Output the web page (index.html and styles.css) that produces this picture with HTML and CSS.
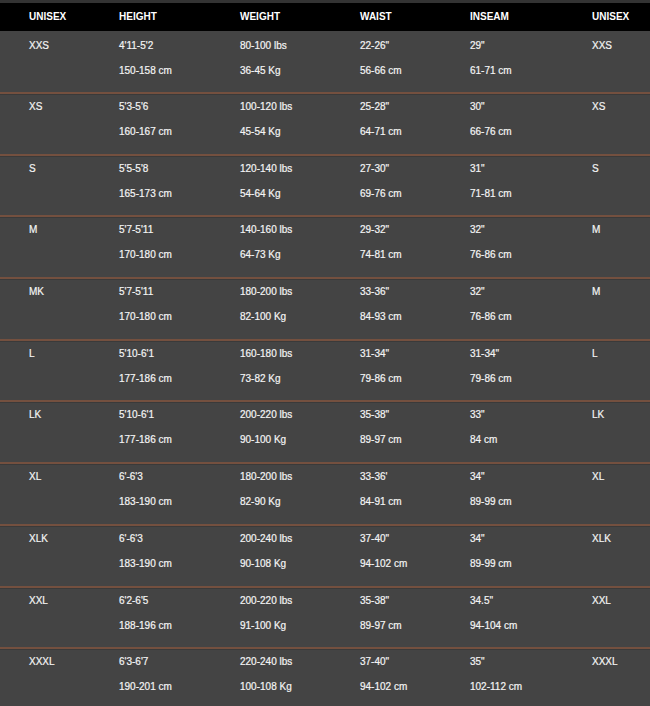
FILE: index.html
```html
<!DOCTYPE html>
<html>
<head>
<meta charset="utf-8">
<link rel="stylesheet" href="styles.css">
</head>
<body>
<div class="chart">
  <div class="row head">
    <div>UNISEX</div><div>HEIGHT</div><div>WEIGHT</div><div>WAIST</div><div>INSEAM</div><div>UNISEX</div>
  </div>
  <div class="row">
    <div>XXS</div><div>4'11-5'2<br>150-158 cm</div><div>80-100 lbs<br>36-45 Kg</div><div>22-26"<br>56-66 cm</div><div>29"<br>61-71 cm</div><div>XXS</div>
  </div>
  <div class="row">
    <div>XS</div><div>5'3-5'6<br>160-167 cm</div><div>100-120 lbs<br>45-54 Kg</div><div>25-28"<br>64-71 cm</div><div>30"<br>66-76 cm</div><div>XS</div>
  </div>
  <div class="row">
    <div>S</div><div>5'5-5'8<br>165-173 cm</div><div>120-140 lbs<br>54-64 Kg</div><div>27-30"<br>69-76 cm</div><div>31"<br>71-81 cm</div><div>S</div>
  </div>
  <div class="row">
    <div>M</div><div>5'7-5'11<br>170-180 cm</div><div>140-160 lbs<br>64-73 Kg</div><div>29-32"<br>74-81 cm</div><div>32"<br>76-86 cm</div><div>M</div>
  </div>
  <div class="row">
    <div>MK</div><div>5'7-5'11<br>170-180 cm</div><div>180-200 lbs<br>82-100 Kg</div><div>33-36"<br>84-93 cm</div><div>32"<br>76-86 cm</div><div>M</div>
  </div>
  <div class="row">
    <div>L</div><div>5'10-6'1<br>177-186 cm</div><div>160-180 lbs<br>73-82 Kg</div><div>31-34"<br>79-86 cm</div><div>31-34"<br>79-86 cm</div><div>L</div>
  </div>
  <div class="row">
    <div>LK</div><div>5'10-6'1<br>177-186 cm</div><div>200-220 lbs<br>90-100 Kg</div><div>35-38"<br>89-97 cm</div><div>33"<br>84 cm</div><div>LK</div>
  </div>
  <div class="row">
    <div>XL</div><div>6'-6'3<br>183-190 cm</div><div>180-200 lbs<br>82-90 Kg</div><div>33-36'<br>84-91 cm</div><div>34"<br>89-99 cm</div><div>XL</div>
  </div>
  <div class="row">
    <div>XLK</div><div>6'-6'3<br>183-190 cm</div><div>200-240 lbs<br>90-108 Kg</div><div>37-40"<br>94-102 cm</div><div>34"<br>89-99 cm</div><div>XLK</div>
  </div>
  <div class="row">
    <div>XXL</div><div>6'2-6'5<br>188-196 cm</div><div>200-220 lbs<br>91-100 Kg</div><div>35-38"<br>89-97 cm</div><div>34.5"<br>94-104 cm</div><div>XXL</div>
  </div>
  <div class="row last">
    <div>XXXL</div><div>6'3-6'7<br>190-201 cm</div><div>220-240 lbs<br>100-108 Kg</div><div>37-40"<br>94-102 cm</div><div>35"<br>102-112 cm</div><div>XXXL</div>
  </div>
</div>
</body>
</html>
```
FILE: styles.css
```css
html, body {
  margin: 0;
  padding: 0;
  background: #444444;
}
.chart {
  width: 650px;
  height: 706px;
  overflow: hidden;
  background: #444444;
  font-family: "Liberation Sans", Arial, sans-serif;
  font-size: 10px;
  color: #f4f4f4;
  -webkit-text-stroke: 0.2px #f4f4f4;
  border-top: 3px solid #333333;
}
.row {
  display: grid;
  grid-template-columns: 90px 121px 120px 110px 122px 1fr;
  padding-left: 29px;
  line-height: 25px;
  height: 59.7px;
  border-bottom: 2px solid #74503f;
  box-shadow: 0 1px 0 #3a3a3a;
}
.row.head {
  background: #000000;
  font-weight: bold;
  height: 28px;
  line-height: 28px;
  border-bottom: none;
  box-shadow: none;
  color: #ffffff;
  -webkit-text-stroke: 0;
}
.row.head + .row {
  box-sizing: border-box;
  height: 63px;
  padding-top: 2px;
}
.row.last {
  border-bottom: none;
}
```
